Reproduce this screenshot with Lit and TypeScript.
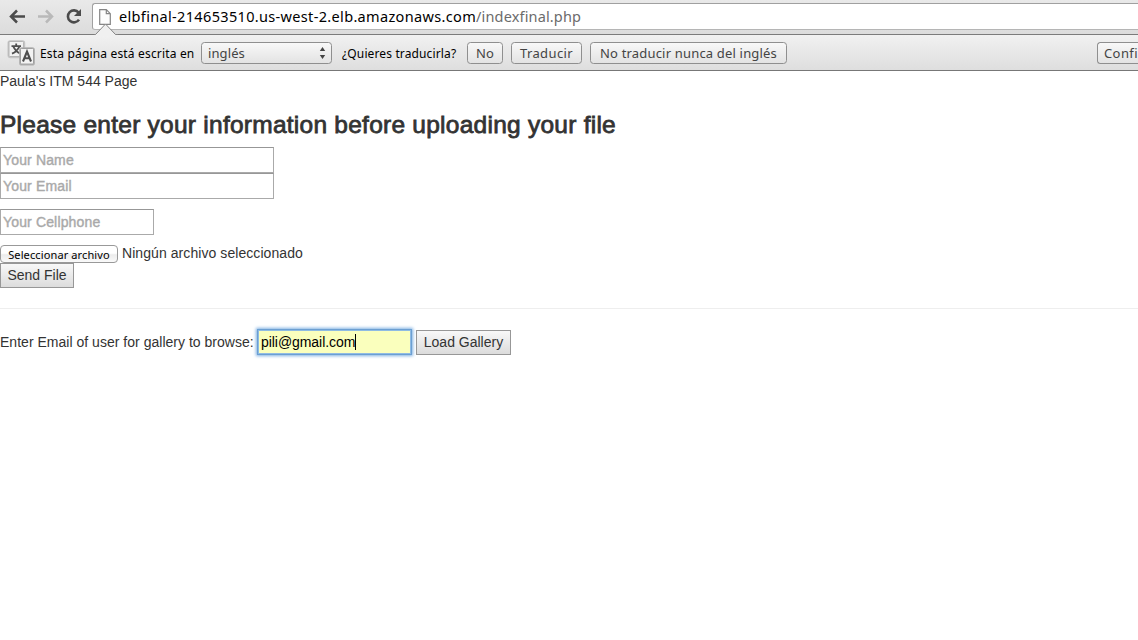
import { LitElement, html, css } from "lit";
import { customElement } from "lit/decorators.js";

@customElement("app-root")
class AppRoot extends LitElement {
  static styles = css`
    :host { display: block; width: 100%; height: 640px; overflow: hidden; background: #fff; color: #333;
      font: 14px/20px "Liberation Sans", Arial, sans-serif; }
    * { box-sizing: border-box; }
    svg { display: block; flex: none; }
    .toolbar { position: relative; height: 35px; padding-top: 3px; padding-left: 8px; display: flex; align-items: flex-start;
      background: linear-gradient(#e9e9e9, #dcdcdc); border-bottom: 1px solid #7b7b7b; }
    .nav { width: 84px; height: 27px; }
    .omnibox { flex: 1; height: 27px; display: flex; align-items: center; background: #fff; border: 1px solid #a0a0a0;
      border-bottom-color: #b5b5b5; border-right: 0; border-radius: 3px 0 0 3px; padding-left: 6px;
      font: 14.5px/24px "Noto Sans", sans-serif; color: #000; white-space: nowrap; }
    .host, .path { padding-bottom: 2px; }
    .host { letter-spacing: 0.337px; }
    .path { color: #6b6b6b; letter-spacing: 0.15px; }
    .doc { margin-right: 8px; }
    .notch { position: absolute; left: 94px; top: 23px; }
    .infobar { height: 36px; display: flex; align-items: center; padding-left: 7px;
      background: linear-gradient(#f1f1f1, #dedede); border-bottom: 1px solid #777;
      font: 12px/20px "Noto Sans", sans-serif; color: #000; white-space: nowrap; }
    .q1 { margin-left: 5px; width: 161px; padding-top: 2px; letter-spacing: 0.17px; }
    .q2 { margin-left: 10px; width: 125px; padding-top: 2px; letter-spacing: 0.13px; }
    .btn { height: 22px; border: 1px solid #8f8f8f; border-radius: 3.5px; background: linear-gradient(#f8f8f8, #e3e3e3);
      color: #444; line-height: 21px; text-align: center; flex: none; font-size: 13px; }
    .select { width: 131px; display: flex; align-items: center; justify-content: space-between; padding: 0 5px 0 6px; letter-spacing: 0.1px; }
    .choice { padding-top: 1px; }
    .no { width: 36px; letter-spacing: 0.1px; }
    .yes { width: 71px; margin-left: 8px; letter-spacing: 0.4px; }
    .never { width: 197px; margin-left: 8px; letter-spacing: 0.18px; }
    .conf { width: 41px; margin-left: auto; text-align: left; padding-left: 6px; letter-spacing: 0.4px;
      border-right: 0; border-radius: 3.5px 0 0 3.5px; }
    .page { display: flex; flex-direction: column; align-items: flex-start; white-space: nowrap; }
    h3 { margin: 14px 0 2px; font-size: 24.5px; line-height: 40px; font-weight: 400; letter-spacing: 0.25px; -webkit-text-stroke: 0.8px #333; }
    .field { width: 274px; height: 26px; border: 1px solid #aaa; border-top-color: #979797; padding: 0 2px; line-height: 24px; color: #a9a9a9;
      letter-spacing: 0.15px; -webkit-text-stroke: 0.4px #a9a9a9; }
    .cell { width: 154px; margin: 10px 0; }
    .file { display: flex; height: 18px; }
    .choose { width: 118px; height: 18px; border: 1px solid #999; border-radius: 4px; background: linear-gradient(#fff 45%, #ececec 55%, #fafafa);
      color: #000; font: 11px/18px "Noto Sans", sans-serif; letter-spacing: 0.12px; text-align: center; margin-right: 4px; }
    .filename { line-height: 17px; letter-spacing: 0.07px; }
    .push { height: 25px; border: 1px solid #979797; background: linear-gradient(#f8f8f8, #dcdcdc); line-height: 23px; text-align: center; }
    .send { width: 74px; }
    .rule { width: 100%; height: 1px; background: #eee; margin: 20px 0; }
    .row { display: flex; align-items: center; height: 26px; }
    .lbl { width: 257px; letter-spacing: 0.02px; }
    .email { width: 155px; height: 26px; border: 1px solid #6b9fd2; background: #faffbd; color: #000; padding-left: 3px;
      letter-spacing: -0.06px; box-shadow: 0 0 3px 1px #7eb0e2, inset 0 0 0 1px #8fbbe3; display: flex; align-items: center; margin-right: 4px; }
    .caret { width: 1px; height: 16px; background: #000; }
    .load { width: 95px; }
  `;
  render() {
    return html`
      <div class="toolbar">
        <svg class="nav" width="84" height="27" viewBox="8 3 84 27" fill="none">
          <path d="M11.5 16.5H25M17 10.5l-6 6 6 6" stroke="#4b4b4b" stroke-width="2.5"/>
          <path d="M38 16.5h13.5M46 10.5l6 6-6 6" stroke="#b9b9b9" stroke-width="2.5"/>
          <path d="M78.6 12.6a6 6 0 1 0 .4 7" stroke="#4b4b4b" stroke-width="2.6"/>
          <path d="M81 9v7h-7z" fill="#4b4b4b"/>
        </svg>
        <div class="omnibox">
          <svg class="doc" width="12" height="16" viewBox="0 0 12 16"><path d="M.7.7h6.6l4 4v10.6H.7zM7.3.7v4h4" fill="#fdfdfd" stroke="#858585" stroke-width="1.2"/></svg>
          <span class="host">elbfinal-214653510.us-west-2.elb.amazonaws.com</span><span class="path">/indexfinal.php</span>
        </div>
        <svg class="notch" width="24" height="13" viewBox="0 0 24 13"><path d="M0 13v-1.5h1.5L11.5 1l10 10.5H24V13z" fill="#f0f0f0"/><path d="M0 11.5h1.5L11.5 1l10 10.5H24" fill="none" stroke="#858585"/></svg>
      </div>
      <div class="infobar">
        <svg width="28" height="28" viewBox="0 0 28 28">
          <rect x="1.2" y="2" width="16.3" height="16.5" rx="2" fill="none" stroke="#c4c4c4" stroke-width="1.4"/>
          <rect x="2" y="2.5" width="14.5" height="15" rx="1" fill="#f1f1f1" stroke="#a8a8a8" stroke-width=".8"/>
          <path d="M4.5 7.2h9.5M9.2 4.5v2.7M12.3 7.6Q10 12.6 5 14.6M6.4 7.6Q8.7 12.6 13.5 14.6" fill="none" stroke="#4f4f4f" stroke-width="1.8"/>
          <rect x="12.8" y="8.9" width="14.4" height="17" rx="2" fill="none" stroke="#b0b0b0" stroke-width="1.4"/>
          <rect x="13.5" y="9.5" width="13" height="15.5" rx="1" fill="#f3f3f3" stroke="#8f8f8f" stroke-width=".8"/>
          <path d="M16 22.5l4-10 4 10M17.4 19.3h5.2" fill="none" stroke="#4f4f4f" stroke-width="2.1"/>
        </svg>
        <span class="q1">Esta página está escrita en</span>
        <div class="btn select"><span class="choice">inglés</span>
          <svg width="7" height="12" viewBox="0 0 7 12"><path d="M3.5 0l2.7 4H.8zM3.5 12L.8 8h5.4z" fill="#444"/></svg></div>
        <span class="q2">¿Quieres traducirla?</span>
        <div class="btn no">No</div><div class="btn yes">Traducir</div>
        <div class="btn never">No traducir nunca del inglés</div><div class="btn conf">Confi</div>
      </div>
      <div class="page">
        <span>Paula's ITM 544 Page</span>
        <h3>Please enter your information before uploading your file</h3>
        <div class="field">Your Name</div>
        <div class="field">Your Email</div>
        <div class="field cell">Your Cellphone</div>
        <div class="file"><div class="choose">Seleccionar archivo</div><span class="filename">Ningún archivo seleccionado</span></div>
        <div class="push send">Send File</div>
        <div class="rule"></div>
        <div class="row"><span class="lbl">Enter Email of user for gallery to browse:</span>
          <div class="email"><span>pili@gmail.com</span><span class="caret"></span></div>
          <div class="push load">Load Gallery</div></div>
      </div>`;
  }
}
